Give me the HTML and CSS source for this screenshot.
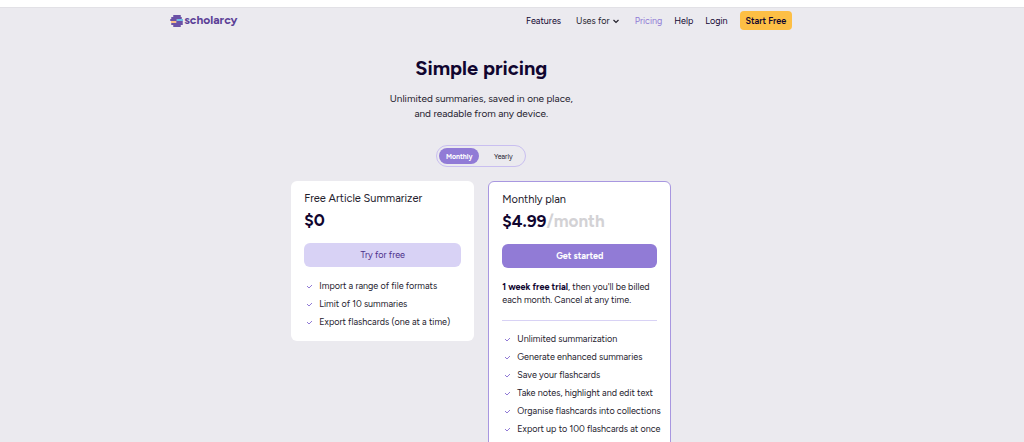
FILE: index.html
```html
<!DOCTYPE html>
<html lang="en">
<head>
    <meta charset="UTF-8">
    <meta name="viewport" content="width=device-width, initial-scale=1.0">
    <title>Scholarcy - Pricing</title>
    <link rel="stylesheet" href="styles.css">
</head>
<body>
    <div class="topbar"></div>

    <div class="page">
        <header>
            <a href="/" class="logo">
                <svg width="14" height="12" viewBox="0 0 14 12" aria-hidden="true">
                    <g fill="#6a51a6">
                        <rect x="3" y="0" width="8" height="2" rx="1"/>
                        <rect x="1" y="2" width="11" height="2" rx="1"/>
                        <rect x="0" y="4" width="7" height="2" rx="1"/>
                        <rect x="6" y="6" width="7" height="2" rx="1"/>
                        <rect x="1" y="8" width="12" height="2" rx="1"/>
                        <rect x="3" y="10" width="8" height="2" rx="1"/>
                    </g>
                    <rect x="7" y="4" width="6" height="2" fill="#6fc0e6"/>
                    <rect x="1" y="6" width="5" height="2" fill="#f6c08a"/>
                </svg>
                <span>scholarcy</span>
            </a>
            <nav>
                <a href="/features">Features</a>
                <a href="/uses" class="uses">Uses for
                    <svg width="8" height="5" viewBox="0 0 8 5" aria-hidden="true"><path d="M1.500 1L4 3.500 6.500 1" fill="none" stroke="currentColor" stroke-width="1.200"/></svg>
                </a>
                <a href="/pricing" class="current">Pricing</a>
                <a href="/help">Help</a>
                <a href="/login">Login</a>
                <a href="/signup" class="btn-start">Start Free</a>
            </nav>
        </header>

        <main>
            <h1>Simple pricing</h1>
            <p class="subtitle">Unlimited summaries, saved in one place,<br>and readable from any device.</p>

            <div class="toggle">
                <button type="button" class="active">Monthly</button>
                <button type="button">Yearly</button>
            </div>

            <div class="plans">
                <section class="card">
                    <h2>Free Article Summarizer</h2>
                    <p class="price">$0</p>
                    <button type="button" class="btn btn-light">Try for free</button>
                    <ul>
                        <li>Import a range of file formats</li>
                        <li>Limit of 10 summaries</li>
                        <li>Export flashcards (one at a time)</li>
                    </ul>
                </section>

                <section class="card featured">
                    <h2>Monthly plan</h2>
                    <p class="price">$4.99<span>/month</span></p>
                    <button type="button" class="btn">Get started</button>
                    <p class="trial"><strong>1 week free trial</strong>, then you'll be billed<br>each month. Cancel at any time.</p>
                    <ul>
                        <li>Unlimited summarization</li>
                        <li>Generate enhanced summaries</li>
                        <li>Save your flashcards</li>
                        <li>Take notes, highlight and edit text</li>
                        <li>Organise flashcards into collections</li>
                        <li>Export up to 100 flashcards at once</li>
                    </ul>
                </section>
            </div>
        </main>
    </div>
</body>
</html>
```
FILE: styles.css
```css
:root {
    --primary: #917bd6;
    --primary-light: #d8d2f5;
    --heading: #10052f;
    --text: #23202c;
    --bg: #ebeaef;
}

* {
    box-sizing: border-box;
}

body {
    margin: 0;
    background: var(--bg);
    color: var(--text);
    font-family: 'Figtree', 'Lato', sans-serif;
    font-size: 9px;
    line-height: 13px;
}

h1, h2, p, ul {
    margin: 0;
    padding: 0;
}

a {
    color: inherit;
    text-decoration: none;
}

button {
    border: 0;
    font: inherit;
    cursor: pointer;
}

.topbar {
    height: 8px;
    background: #fff;
    border-bottom: 1px solid #e2e1e6;
}

.page {
    margin-right: 6%;
}

header {
    max-width: 622px;
    margin: 0 auto;
    padding-top: 3px;
    display: flex;
    justify-content: space-between;
    align-items: center;
}

.logo {
    display: flex;
    align-items: center;
    color: #5b3f97;
    font-size: 12px;
    font-weight: 700;
}

nav {
    display: flex;
    align-items: center;
    gap: 12px;
    color: var(--heading);
}

.uses {
    margin: 0 3px;
    color: var(--text);
}

.current {
    color: var(--primary);
}

.btn-start {
    padding: 3px 6px;
    border-radius: 4px;
    background: #fdbf45;
    font-weight: 600;
}

h1 {
    margin-top: 25px;
    color: var(--heading);
    font-size: 20px;
    line-height: 26px;
    text-align: center;
}

.subtitle {
    margin-top: 10px;
    font-size: 10px;
    line-height: 15px;
    text-align: center;
}

.toggle {
    width: 90px;
    height: 22px;
    margin: 24px auto 14px;
    padding: 2px;
    display: flex;
    gap: 4px;
    border: 1px solid #c9bff0;
    border-radius: 11px;
}

.toggle button {
    flex: 1 1 0;
    padding: 0;
    border-radius: 8px;
    background: transparent;
    color: var(--text);
    font-size: 7px;
}

.toggle .active {
    background: var(--primary);
    color: #fff;
    font-weight: 700;
}

.plans {
    max-width: 380px;
    margin: 0 auto;
    display: grid;
    grid-template-columns: repeat(2, minmax(0, 1fr));
    gap: 14px;
    align-items: start;
}

.card {
    padding: 11px 13px 10px;
    border-radius: 6px;
    background: #fff;
}

.card.featured {
    border: 1px solid #a897e0;
}

.card h2 {
    font-size: 11px;
    font-weight: 400;
    line-height: 14px;
}

.price {
    margin-top: 3px;
    color: var(--heading);
    font-size: 17px;
    font-weight: 700;
    line-height: 22px;
}

.price span {
    color: #d3d2d5;
}

.btn {
    width: 100%;
    height: 24px;
    margin-top: 12px;
    padding: 0 0 1px;
    border-radius: 6px;
    background: var(--primary);
    color: #fff;
    font-weight: 700;
}

.btn-light {
    background: var(--primary-light);
    color: #4b2f8a;
    font-weight: 400;
}

.trial {
    margin-top: 12px;
    padding-bottom: 14px;
    border-bottom: 1px solid var(--primary-light);
}

.trial strong {
    color: var(--heading);
}

ul {
    margin-top: 10px;
    list-style: none;
}

.featured ul {
    margin-top: 9px;
}

li {
    padding-left: 15px;
    line-height: 18px;
    white-space: nowrap;
    background: url("data:image/svg+xml,%3Csvg xmlns='http://www.w3.org/2000/svg' width='7' height='5'%3E%3Cpath d='M1 2l2 2L6 1' fill='none' stroke='%23917bd6'/%3E%3C/svg%3E") no-repeat 2px center;
}
```
